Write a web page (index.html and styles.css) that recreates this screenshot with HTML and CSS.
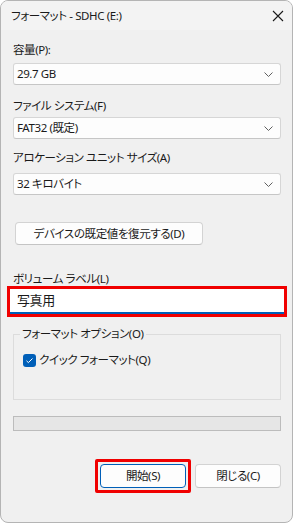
FILE: index.html
```html
<!DOCTYPE html>
<html lang="ja">
<head>
<meta charset="utf-8">
<title>フォーマット - SDHC (E:)</title>
<link rel="stylesheet" href="styles.css">
</head>
<body>
<div class="window">
  <div class="titlebar">
    <span class="title">フォーマット - SDHC (E:)</span>
    <svg class="close" width="12" height="12" viewBox="0 0 12 12"><path d="M1 1L11 11M11 1L1 11" stroke="#1a1a1a" stroke-width="1.1" fill="none"/></svg>
  </div>
  <div class="content">
    <div class="label l1">容量(P):</div>
    <div class="combo c1"><span>29.7 GB</span><svg class="chev" width="9" height="5" viewBox="0 0 9 5"><path d="M0.5 0.5L4.5 4.5L8.5 0.5" stroke="#606060" stroke-width="1" fill="none"/></svg></div>
    <div class="label l2">ファイル システム(F)</div>
    <div class="combo c2"><span>FAT32 (既定)</span><svg class="chev" width="9" height="5" viewBox="0 0 9 5"><path d="M0.5 0.5L4.5 4.5L8.5 0.5" stroke="#606060" stroke-width="1" fill="none"/></svg></div>
    <div class="label l3">アロケーション ユニット サイズ(A)</div>
    <div class="combo c3"><span>32 キロバイト</span><svg class="chev" width="9" height="5" viewBox="0 0 9 5"><path d="M0.5 0.5L4.5 4.5L8.5 0.5" stroke="#606060" stroke-width="1" fill="none"/></svg></div>
    <div class="btn restore">デバイスの既定値を復元する(D)</div>
    <div class="label l4">ボリューム ラベル(L)</div>
    <div class="textbox">写真用</div>
    <fieldset class="group">
      <legend>フォーマット オプション(O)</legend>
      <div class="check-row">
        <span class="checkbox"><svg width="13" height="13" viewBox="0 0 13 13"><path d="M3.5 6.8L5.4 8.6L9.5 4.5" stroke="#fff" stroke-width="1" fill="none"/></svg></span>
        <span>クイック フォーマット(Q)</span>
      </div>
    </fieldset>
    <div class="progress"></div>
    <div class="actions">
      <div class="mark"><div class="btn primary">開始(S)</div></div>
      <div class="btn">閉じる(C)</div>
    </div>
  </div>
</div>
</body>
</html>
```
FILE: styles.css
```css
* { box-sizing: border-box; }
html, body { margin: 0; padding: 0; background: #ffffff; }
body {
  font-family: "Noto Sans", "Noto Sans CJK JP", sans-serif;
  font-feature-settings: "palt";
  font-size: 11.5px;
  letter-spacing: -0.4px;
  color: #1a1a1a;
}
.window {
  width: 293px;
  height: 523px;
  border: 1px solid #b4b4b4;
  border-radius: 8px;
  background: #f0f0f0;
  overflow: hidden;
}
.titlebar {
  height: 29px;
  background: #f3f3f3;
  display: flex;
  align-items: center;
  justify-content: space-between;
  padding: 0 8px 0 10px;
}
.title { line-height: 16px; }
.close { display: block; }
.content {
  padding: 12px 11px 0 12px;
}
.label { line-height: 16px; }
.l1 { margin-bottom: 5px; }
.l2 { margin-top: 13px; margin-bottom: 3px; }
.l3 { margin-top: 11px; margin-bottom: 7px; }
.l4 { margin-top: 26px; margin-bottom: 2px; }
.combo {
  height: 22px;
  background: #fdfdfd;
  border: 1px solid #d6d6d6;
  border-bottom-color: #c6c6c6;
  border-radius: 3px;
  display: flex;
  align-items: center;
  justify-content: space-between;
  padding: 0 7px 0 3px;
  line-height: 16px;
}
.chev { display: block; }
.btn {
  height: 23px;
  background: #fdfdfd;
  border: 1px solid #d3d3d3;
  border-bottom-color: #c4c4c4;
  border-radius: 4px;
  display: flex;
  align-items: center;
  justify-content: center;
  line-height: 16px;
}
.restore {
  width: 188px;
  margin: 27px 0 0 2px;
}
.textbox {
  margin-left: -3px;
  width: 274px;
  height: 25px;
  background: #ffffff;
  border-bottom: 2px solid #005fb8;
  padding-left: 7px;
  line-height: 23px;
  font-size: 13px;
  outline: 3px solid #f00000;
}
.group {
  margin: 12px 0 0 0;
  padding: 0 0 31px 0;
  border: 1px solid #dcdcdc;
  min-width: 0;
}
.group legend {
  margin-left: 6px;
  padding: 0 2px;
  line-height: 16px;
}
.check-row {
  margin-top: 10px;
  display: flex;
  align-items: center;
  gap: 3px;
  padding-left: 9px;
  line-height: 16px;
}
.checkbox {
  width: 13px;
  height: 13px;
  background: #005fb8;
  border-radius: 3px;
  display: block;
}
.checkbox svg { display: block; }
.progress {
  margin-top: 16px;
  height: 15px;
  background: #e6e6e6;
  border: 1px solid #bcbcbc;
}
.actions {
  margin-top: 28px;
  display: flex;
  justify-content: flex-end;
  align-items: center;
  gap: 4px;
}
.actions .btn { width: 86px; height: 24px; }
.primary { border-color: #005fb8; }
.mark {
  border: 3px solid #f00000;
  border-radius: 2px;
  padding: 2px;
}
```
